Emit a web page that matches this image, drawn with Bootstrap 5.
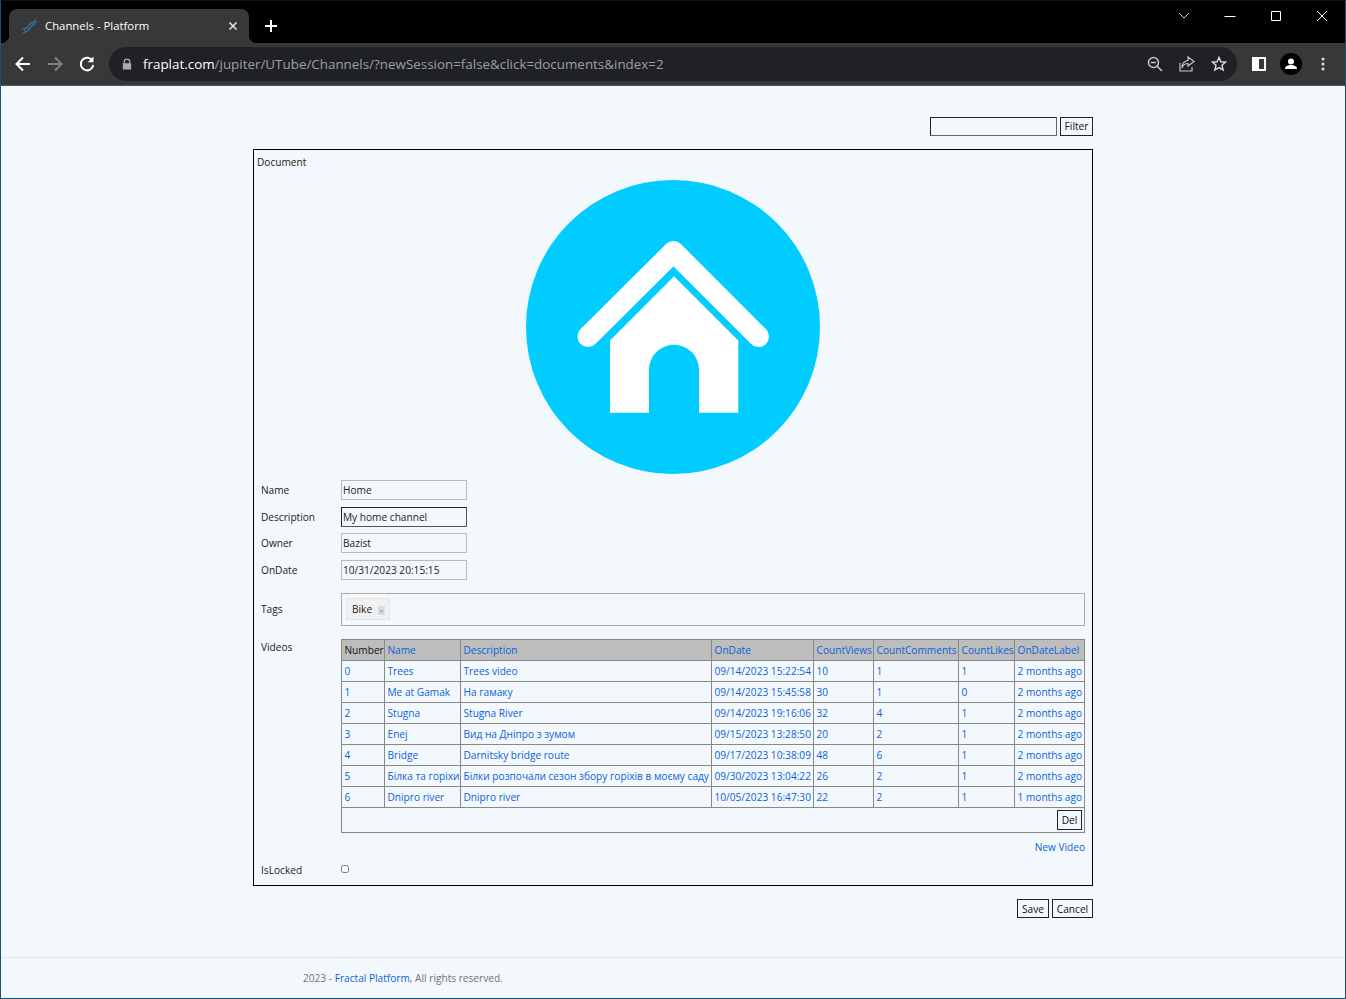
<!DOCTYPE html>
<html lang="en">
<head>
  <meta charset="UTF-8">
  <meta name="viewport" content="width=device-width, initial-scale=1.0">
  <title>Channels - Platform</title>
  <link href="https://cdn.jsdelivr.net/npm/bootstrap@5.3.0/dist/css/bootstrap.min.css" rel="stylesheet">
  <style>
    body {
      background-color: #f3f8fc;
      color: #222;
      font-family: "Open Sans", "Liberation Sans", sans-serif;
      font-size: 10.15px;
      line-height: 16px;
      min-height: 999px;
      border: 1px solid #14566f;
      border-top-color: #111;
    }
    a { color: #0d62d8; text-decoration: none; }
    .tab-strip { background: #000; height: 42px; }
    .browser-tab {
      position: relative;
      background: #383838;
      color: #fff;
      width: 240px;
      height: 34px;
      margin-left: 8px;
      margin-top: 8px;
      padding: 0 8px 0 12px;
      border-radius: 8px 8px 0 0;
      font-size: 11.35px;
    }
    .browser-tab::before, .browser-tab::after {
      content: "";
      position: absolute;
      bottom: 0;
      width: 8px;
      height: 8px;
    }
    .browser-tab::before { left: -8px; background: radial-gradient(circle at 0 0, #000 8px, #383838 8.5px); }
    .browser-tab::after { right: -8px; background: radial-gradient(circle at 100% 0, #000 8px, #383838 8.5px); }
    .tab-plus { margin: 7px 0 0 14px; width: 16px; }
    .win-btn { width: 46px; height: 29px; }
    .tool-bar { background: #383838; height: 43px; padding: 4px 6px 5px; border-bottom: 1px solid #555; }
    .tool-btn { width: 32px; height: 34px; flex: none; }
    .omni-box {
      background: #202124;
      height: 34px;
      margin: 0 6px;
      padding-right: 2px;
      border-radius: 17px;
      font-size: 13.4px;
      color: #9aa0a6;
    }
    .omni-lock { width: 34px; padding-left: 2px; flex: none; }
    .omni-host { color: #fff; }
    .page-col { width: 840px; padding-top: 31px; }
    .filter-input, .plain-btn { height: 19px; font-size: 10.15px; line-height: 15px; }
    .filter-input { width: 127px; background: transparent; border: 1px solid; border-color: #222 #666 #666 #222; }
    .plain-btn { background: transparent; color: #111; border: 1px solid #222; border-radius: 0; padding: 0; }
    .btn-filter { width: 33px; }
    .btn-save { width: 32px; padding-top: 1px; }
    .btn-cancel { width: 41px; padding-top: 1px; }
    .btn-gap { gap: 3px; }
    .doc-box { border: 1px solid #000; height: 737px; margin: 13px 0; padding: 4px 3px 0; }
    .doc-art { width: 294px; height: 294px; margin-top: 10px; }
    .form-area { margin: 6px 4px 0; }
    .field-row { height: 26.67px; }
    .field-label { width: 80px; flex: none; line-height: 20px; }
    .videos-label { line-height: 16px; }
    .field-input {
      width: 126px;
      height: 20px;
      padding: 0 1px;
      background: transparent;
      border: 1px solid #bbb;
      font-size: 10.15px;
      color: #222;
    }
    .field-focus { border-color: #222 #555 #555 #222; }
    .tags-row { margin: 6px 0 13px; }
    .tags-box { height: 33px; border: 1px solid #aaa; padding: 4px; }
    .tag-chip { height: 22px; padding: 0 4px 0 5px; border: 1px solid #e6e6e6; background: #f1f1f1; width: 44px; line-height: 20px; }
    .tag-x { width: 7px; height: 9px; background: #ddd; color: #999; font-size: 8px; line-height: 9px; text-align: center; margin-left: auto; margin-top: 7px; }
    .video-table { width: 744px; table-layout: fixed; border-color: #888; color: #0d62d8; --bs-table-bg: transparent; --bs-table-color: #0d62d8; --bs-table-border-color: #888; }
    .video-table > :not(caption) > * > * { padding: 0 2px 0 2.5px; height: 21px; line-height: 20px; white-space: nowrap; overflow: hidden; border-color: #888; }
    .video-table thead th { background: #bdbdbd; font-weight: 400; vertical-align: top; }
    .video-table thead th:first-child { color: #111; }
    .video-table .del-cell { height: 25px; padding: 2px 2px 0 0; text-align: right; color: #111; vertical-align: top; }
    .del-btn { height: 20px; width: 25px; padding: 1px 0 0; }
    .new-video { margin-top: 6px; }
    .lock-row { margin-top: 8px; }
    .lock-box { width: 8px; height: 8px; margin: 2px 0 0 0; border: 1px solid #777; border-radius: 1px; background: #fff; }
    .site-foot { margin-top: 39px; height: 41px; border-top: 1px solid #e2e6ea; padding: 12px 0 0 302px; color: #6c757d; }
  </style>
</head>
<body>
  <div class="tab-strip d-flex align-items-start">
    <div class="browser-tab d-flex align-items-center">
      <svg width="16" height="16" viewBox="0 0 16 16" class="me-2 flex-none" fill="none" stroke="#35749c" stroke-width="1.2">
        <path d="M1.500 11.500C4 9 5 11 7 8.500S9 4 11 4.500 13.500 3.500 14.500 1.500"/>
        <path d="M2 14.500C5 15 6.500 13.500 8 11.500S10.500 8 12 7.500 14.500 6 15 3.500"/>
        <path d="M3.500 10.500l1 3.500M6.500 9l1 3M8.500 6l2 2.500M10.500 4.500l1.500 2.500M13 3l1 2"/>
      </svg>
      <span>Channels - Platform</span>
      <svg class="ms-auto" width="16" height="16" viewBox="0 0 16 16" stroke="#e8eaed" stroke-width="1.5"><path d="M4.5 4.5l7 7M11.5 4.5l-7 7"/></svg>
    </div>
    <svg class="tab-plus" width="16" height="34" viewBox="0 0 16 34" stroke="#fff" stroke-width="2"><path d="M2 18h12M8 12v12"/></svg>
    <div class="ms-auto d-flex">
      <div class="win-btn d-flex align-items-center justify-content-center"><svg width="12" height="12" viewBox="0 0 12 12" fill="none" stroke="#ccc"><path d="M1 3l5 5 5-5"/></svg></div>
      <div class="win-btn d-flex align-items-center justify-content-center"><svg width="12" height="12" viewBox="0 0 12 12" stroke="#fff"><path d="M.5 6.500h11"/></svg></div>
      <div class="win-btn d-flex align-items-center justify-content-center"><svg width="12" height="12" viewBox="0 0 12 12" fill="none" stroke="#fff"><path d="M1.500 1.500h9v9h-9z"/></svg></div>
      <div class="win-btn d-flex align-items-center justify-content-center"><svg width="12" height="12" viewBox="0 0 12 12" stroke="#fff"><path d="M1 1l10 10M11 1L1 11"/></svg></div>
    </div>
  </div>

  <div class="tool-bar d-flex align-items-center">
    <div class="tool-btn d-flex align-items-center justify-content-center">
      <svg width="18" height="18" viewBox="0 0 18 18" fill="none" stroke="#fff" stroke-width="2"><path d="M16 9H3M9 2.500L2.500 9 9 15.500"/></svg>
    </div>
    <div class="tool-btn d-flex align-items-center justify-content-center">
      <svg width="18" height="18" viewBox="0 0 18 18" fill="none" stroke="#808080" stroke-width="2"><path d="M2 9h13M9 2.500L15.500 9 9 15.500"/></svg>
    </div>
    <div class="tool-btn d-flex align-items-center justify-content-center">
      <svg width="18" height="18" viewBox="0 0 18 18" fill="none" stroke="#fff" stroke-width="2"><path d="M14.600 6A6.300 6.300 0 1 0 15.300 10"/><path d="M15.500 1.500v5.700H9.800z" fill="#fff" stroke="none"/></svg>
    </div>
    <div class="omni-box flex-grow-1 d-flex align-items-center">
      <div class="omni-lock d-flex justify-content-center">
        <svg width="10" height="12" viewBox="0 0 12 14" fill="#a8abaf"><path d="M2 6V4.500a4 4 0 0 1 8 0V6h1v7.500H1V6zm1.500 0h5V4.500a2.500 2.500 0 0 0-5 0z"/></svg>
      </div>
      <span class="flex-grow-1"><span class="omni-host">fraplat.com</span>/jupiter/UTube/Channels/?newSession=false&amp;click=documents&amp;index=2</span>
      <div class="tool-btn d-flex align-items-center justify-content-center">
        <svg width="16" height="16" viewBox="0 0 16 16" fill="none" stroke="#c4c7ca" stroke-width="1.500"><circle cx="6.500" cy="6.500" r="5"/><path d="M10 10l5 5M4 6.500h5"/></svg>
      </div>
      <div class="tool-btn d-flex align-items-center justify-content-center">
        <svg width="16" height="16" viewBox="0 0 16 16" fill="none" stroke="#c4c7ca" stroke-width="1.200"><path d="M1 7v8h12v-4M9 1l6 4.500L9 10V7.500C6 7.500 4 9 3 12c0-4 2-7 6-7.500z"/></svg>
      </div>
      <div class="tool-btn d-flex align-items-center justify-content-center">
        <svg width="16" height="16" viewBox="0 0 16 16" fill="none" stroke="#d5d7da" stroke-width="1.500"><path d="M8 1.500l1.900 4.300 4.600.4-3.500 3.100 1.100 4.600L8 11.500l-4.100 2.400L5 9.300 1.500 6.200l4.600-.4z"/></svg>
      </div>
    </div>
    <div class="tool-btn d-flex align-items-center justify-content-center">
      <svg width="14" height="14" viewBox="0 0 14 14"><path fill="#fff" d="M0 0h14v14H0z"/><path fill="#383838" d="M7 2h5v10H7z"/></svg>
    </div>
    <div class="tool-btn d-flex align-items-center justify-content-center">
      <svg width="22" height="22" viewBox="0 0 22 22"><circle cx="11" cy="11" r="11" fill="#000"/><circle cx="11" cy="8.500" r="3" fill="#fff"/><path fill="#fff" d="M5 16c0-3 3-4 6-4s6 1 6 4z"/></svg>
    </div>
    <div class="tool-btn d-flex align-items-center justify-content-center">
      <svg width="4" height="14" viewBox="0 0 4 14" fill="#e0e0e0"><circle cx="2" cy="2" r="1.500"/><circle cx="2" cy="7" r="1.500"/><circle cx="2" cy="12" r="1.500"/></svg>
    </div>
  </div>

  <main class="page-col mx-auto">
    <div class="d-flex justify-content-end btn-gap">
      <input class="filter-input" type="text" aria-label="Filter">
      <button class="plain-btn btn-filter" type="button">Filter</button>
    </div>

    <div class="doc-box">
      <div>Document</div>
      <svg class="doc-art d-block mx-auto" viewBox="526 179.500 294 294">
        <circle cx="673" cy="326.500" r="147" fill="#00ccff"/>
        <path d="M588 336L673.500 251 758.500 336" fill="none" stroke="#fff" stroke-width="21" stroke-linecap="round" stroke-linejoin="round"/>
        <path fill="#fff" d="M610 340L674 275.700 738.300 340V412.300H699V369.300A25 25 0 0 0 649 369.300V412.300H610z"/>
      </svg>

      <div class="form-area">
        <div class="field-row d-flex"><div class="field-label">Name</div><input class="field-input" type="text" value="Home" aria-label="Name"></div>
        <div class="field-row d-flex"><div class="field-label">Description</div><input class="field-input field-focus" type="text" value="My home channel" aria-label="Description"></div>
        <div class="field-row d-flex"><div class="field-label">Owner</div><input class="field-input" type="text" value="Bazist" aria-label="Owner"></div>
        <div class="field-row d-flex"><div class="field-label">OnDate</div><input class="field-input" type="text" value="10/31/2023 20:15:15" aria-label="OnDate"></div>

        <div class="tags-row d-flex align-items-center">
          <div class="field-label">Tags</div>
          <div class="tags-box flex-grow-1">
            <div class="tag-chip d-flex"><span>Bike</span><span class="tag-x">×</span></div>
          </div>
        </div>

        <div class="d-flex">
          <div class="field-label videos-label">Videos</div>
          <div class="flex-grow-1">
            <table class="video-table table table-bordered mb-0">
              <colgroup>
                <col style="width:43px"><col style="width:76px"><col style="width:251px"><col style="width:102px"><col style="width:60px"><col style="width:85px"><col style="width:56px"><col>
              </colgroup>
              <thead>
                <tr><th>Number</th><th><a href="#">Name</a></th><th><a href="#">Description</a></th><th><a href="#">OnDate</a></th><th><a href="#">CountViews</a></th><th><a href="#">CountComments</a></th><th><a href="#">CountLikes</a></th><th><a href="#">OnDateLabel</a></th></tr>
              </thead>
              <tbody>
                <tr><td>0</td><td>Trees</td><td>Trees video</td><td>09/14/2023 15:22:54</td><td>10</td><td>1</td><td>1</td><td>2 months ago</td></tr>
                <tr><td>1</td><td>Me at Gamak</td><td>На гамаку</td><td>09/14/2023 15:45:58</td><td>30</td><td>1</td><td>0</td><td>2 months ago</td></tr>
                <tr><td>2</td><td>Stugna</td><td>Stugna River</td><td>09/14/2023 19:16:06</td><td>32</td><td>4</td><td>1</td><td>2 months ago</td></tr>
                <tr><td>3</td><td>Enej</td><td>Вид на Дніпро з зумом</td><td>09/15/2023 13:28:50</td><td>20</td><td>2</td><td>1</td><td>2 months ago</td></tr>
                <tr><td>4</td><td>Bridge</td><td>Darnitsky bridge route</td><td>09/17/2023 10:38:09</td><td>48</td><td>6</td><td>1</td><td>2 months ago</td></tr>
                <tr><td>5</td><td>Білка та горіхи</td><td>Білки розпочали сезон збору горіхів в моєму саду</td><td>09/30/2023 13:04:22</td><td>26</td><td>2</td><td>1</td><td>2 months ago</td></tr>
                <tr><td>6</td><td>Dnipro river</td><td>Dnipro river</td><td>10/05/2023 16:47:30</td><td>22</td><td>2</td><td>1</td><td>1 months ago</td></tr>
                <tr><td colspan="8" class="del-cell"><button class="plain-btn del-btn align-top" type="button">Del</button></td></tr>
              </tbody>
            </table>
            <div class="new-video text-end"><a href="#">New Video</a></div>
          </div>
        </div>

        <div class="lock-row d-flex">
          <div class="field-label lh-base">IsLocked</div>
          <input class="lock-box form-check-input" type="checkbox" aria-label="IsLocked">
        </div>
      </div>
    </div>

    <div class="d-flex justify-content-end btn-gap">
      <button class="plain-btn btn-save" type="button">Save</button>
      <button class="plain-btn btn-cancel" type="button">Cancel</button>
    </div>
  </main>

  <footer class="site-foot">2023 - <a href="#">Fractal Platform</a>, All rights reserved.</footer>

  <script src="https://cdn.jsdelivr.net/npm/bootstrap@5.3.0/dist/js/bootstrap.bundle.min.js"></script>
</body>
</html>
